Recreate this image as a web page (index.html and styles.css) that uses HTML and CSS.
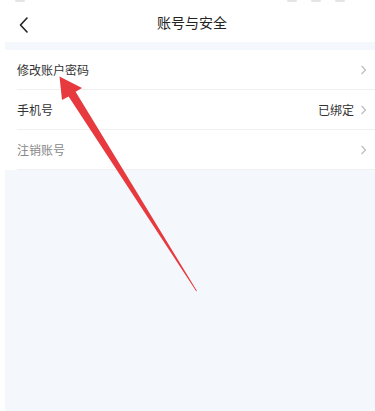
FILE: index.html
```html
<!DOCTYPE html>
<html lang="zh">
<head>
<meta charset="utf-8">
<link rel="stylesheet" href="styles.css">
</head>
<body>
<div class="page">
  <div class="status">
    <span class="st st-left"></span>
    <span class="st-right"><span class="st"></span><span class="st"></span><span class="st"></span></span>
  </div>
  <div class="header">
    <svg class="back" width="12" height="18" viewBox="0 0 12 18"><path d="M9 2 L2.5 9 L9 16" fill="none" stroke="#222" stroke-width="1.6" stroke-linecap="round" stroke-linejoin="round"/></svg>
    <div class="title">账号与安全</div>
  </div>
  <div class="gap"></div>
  <div class="list">
    <div class="row"><span class="label">修改账户密码</span><span class="right"><svg class="chev" width="7" height="10" viewBox="0 0 7 10"><path d="M1.5 1 L5.5 5 L1.5 9" fill="none" stroke="#bbb" stroke-width="1.1"/></svg></span></div>
    <div class="row"><span class="label">手机号</span><span class="right"><span class="value">已绑定</span><svg class="chev" width="7" height="10" viewBox="0 0 7 10"><path d="M1.5 1 L5.5 5 L1.5 9" fill="none" stroke="#bbb" stroke-width="1.1"/></svg></span></div>
    <div class="row"><span class="label muted">注销账号</span><span class="right"><svg class="chev" width="7" height="10" viewBox="0 0 7 10"><path d="M1.5 1 L5.5 5 L1.5 9" fill="none" stroke="#bbb" stroke-width="1.1"/></svg></span></div>
  </div>
  <div class="fill"></div>
</div>
<svg class="arrow" width="375" height="411" viewBox="0 0 375 411"><polygon points="59.5,76.5 82,88 75.6,91.8 197,291 196.2,291.2 68.6,96.4 62,100" fill="#e63a3f"/></svg>
</body>
</html>
```
FILE: styles.css
```css
html, body { margin: 0; padding: 0; background: #fff; }
body { width: 375px; height: 411px; overflow: hidden; font-family: "Noto Sans CJK SC", "Noto Sans", sans-serif; position: relative; }
.page { margin-left: 5px; height: 411px; display: flex; flex-direction: column; }
.status { height: 4px; display: flex; justify-content: space-between; align-items: flex-start; }
.st { display: inline-block; height: 2px; width: 10px; background: #e4e4e4; border-radius: 1px; }
.st-left { margin-left: 10px; }
.st-right { display: flex; gap: 14px; margin-right: 30px; }
.header { height: 38px; display: flex; align-items: center; justify-content: center; position: relative; }
.back { position: absolute; left: 13px; top: 12px; }
.title { font-size: 14px; color: #222; margin-left: 4px; margin-top: -2px; }
.gap { height: 8px; background: #f4f7fb; }
.list { background: #fff; }
.row { height: 40px; margin-left: 12px; display: flex; align-items: center; justify-content: space-between; border-bottom: 1px solid #f0f0f0; box-sizing: border-box; }
.label { font-size: 12px; color: #333; }
.label.muted { color: #888; }
.right { display: flex; align-items: center; gap: 6px; padding-right: 8px; }
.value { font-size: 12px; color: #333; }
.fill { flex: 1; background: #f4f7fb; }
.arrow { position: absolute; left: 0; top: 0; }
```
